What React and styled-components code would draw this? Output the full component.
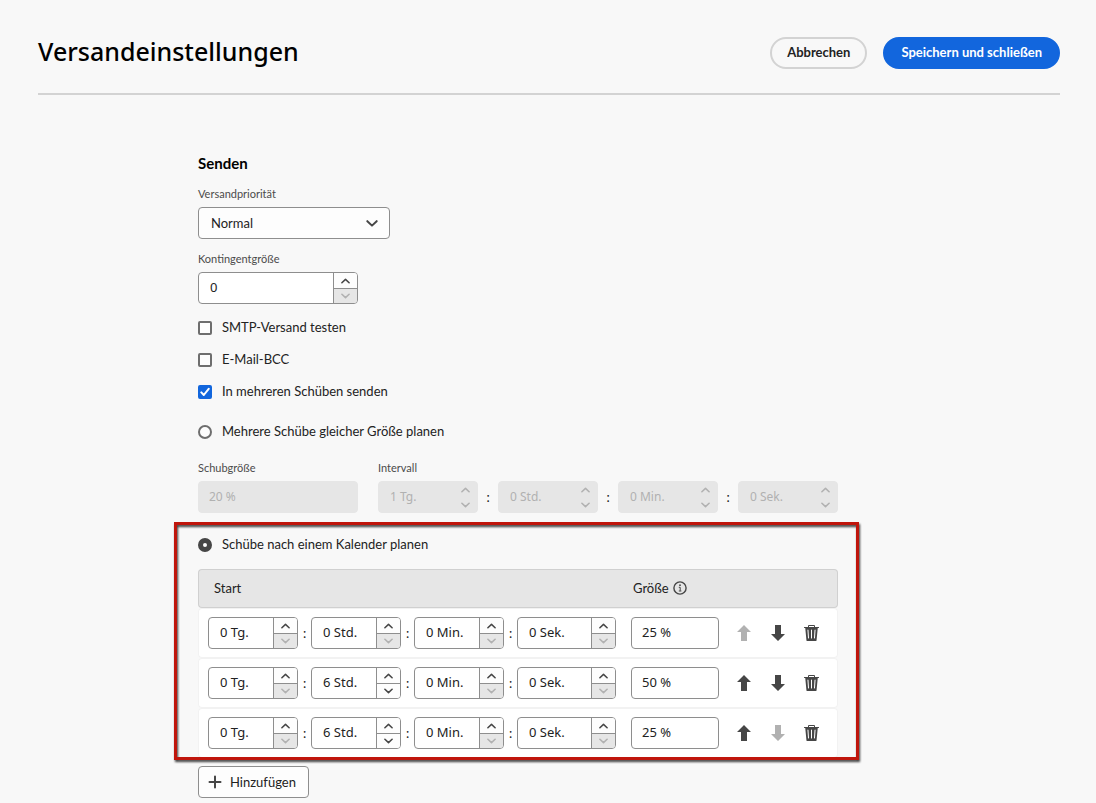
import React, { useState } from "react";
import styled, { createGlobalStyle } from "styled-components";

const GlobalStyle = createGlobalStyle`
  *, *::before, *::after { box-sizing: border-box; }
  body {
    margin: 0;
    background: #f8f8f8;
    color: #222;
    font-family: Lato, "Noto Sans", sans-serif;
    font-size: 13px;
    line-height: 20px;
  }
  input, select, button { font: inherit; color: inherit; margin: 0; }
`;

const Page = styled.div`
  padding: 37px 36px 0 38px;
`;

const Header = styled.header`
  display: flex;
  align-items: flex-start;
  gap: 16px;
  padding-bottom: 24px;
  border-bottom: 2px solid #d3d3d3;
`;

const Title = styled.h1`
  flex: 1;
  margin: 0;
  color: #000;
  font-family: "Noto Sans", sans-serif;
  font-size: 25px;
  font-weight: 500;
  line-height: 28px;
`;

const PillButton = styled.button`
  height: 32px;
  padding: 0 ${(p) => (p.$primary ? "16px" : "15px")} 2px;
  border: 2px solid ${(p) => (p.$primary ? "#1266dd" : "#d3d3d3")};
  border-radius: 16px;
  background: ${(p) => (p.$primary ? "#1266dd" : "transparent")};
  color: ${(p) => (p.$primary ? "#fff" : "#222")};
  font-weight: 700;
  white-space: nowrap;
`;

const Form = styled.main`
  max-width: 640px;
  margin: 58px 0 0 160px;
`;

const SectionTitle = styled.h2`
  margin: 0 0 11px;
  color: #000;
  font-size: 15px;
  font-weight: 700;
  line-height: 20px;
`;

const Field = styled.div`
  display: flex;
  flex-direction: column;
  width: ${(p) => p.$width || "auto"};
  margin-bottom: ${(p) => p.$gap || "0"};
`;

const FieldLabel = styled.label`
  color: #4b4b4b;
  font-size: 11px;
  line-height: 20px;
  padding-bottom: 3px;
`;

const SelectBox = styled.div`
  display: grid;
  align-items: center;
  > * { grid-area: 1 / 1; }
  > svg { justify-self: end; margin-right: 12px; color: #464646; pointer-events: none; }
`;

const Select = styled.select`
  appearance: none;
  height: 32px;
  padding: 0 12px;
  border: 1px solid #8e8e8e;
  border-radius: 4px;
  background: #fdfdfd;
`;

const StepperBox = styled.div`
  display: flex;
  width: ${(p) => p.$width};
  height: 32px;
  border: 1px solid ${(p) => (p.$disabled ? "#e6e6e6" : "#8e8e8e")};
  border-radius: 4px;
  background: ${(p) => (p.$disabled ? "#e6e6e6" : "#fff")};
  overflow: hidden;
`;

const StepperInput = styled.input`
  flex: 1;
  min-width: 0;
  padding: 0 0 2px 11px;
  border: 0;
  background: transparent;
  font-family: "Noto Sans", sans-serif;
  &:disabled { padding-bottom: 0; color: #b1b1b1; font-size: 12px; }
`;

const StepperButtons = styled.div`
  display: grid;
  grid-template-rows: 1fr 1fr;
  width: 24px;
  border-left: 1px solid ${(p) => (p.$disabled ? "#e6e6e6" : "#8e8e8e")};
`;

const StepButton = styled.button`
  display: grid;
  place-items: center;
  padding: 0;
  border: 0;
  background: #fdfdfd;
  color: #464646;
  & + & { border-top: 1px solid #8e8e8e; }
  &:disabled { background: #e6e6e6; color: #b1b1b1; }
  & + &:disabled { border-top-color: ${(p) => (p.$flat ? "#e6e6e6" : "#8e8e8e")}; }
`;

const TextInput = styled.input`
  width: ${(p) => p.$width};
  height: 32px;
  padding: 0 10px 2px;
  border: 1px solid #8e8e8e;
  border-radius: 4px;
  background: #fff;
  font-family: "Noto Sans", sans-serif;
  vertical-align: middle;
  &:disabled { border-color: #e6e6e6; background: #e6e6e6; color: #b1b1b1; font-size: 12px; }
`;

const Choice = styled.label`
  display: flex;
  align-items: center;
  gap: 10px;
  height: ${(p) => p.$height || "32px"};
`;

const ChoiceText = styled.span`
  padding-bottom: 2px;
`;

const Tick = styled.span`
  display: grid;
  place-items: center;
  > * { grid-area: 1 / 1; }
  > svg { pointer-events: none; }
`;

const CheckInput = styled.input`
  appearance: none;
  width: 14px;
  height: 14px;
  border: 2px solid #6e6e6e;
  border-radius: 2px;
  background: #fdfdfd;
  &:checked { border-color: #1266dd; background: #1266dd; }
`;

const RadioInput = styled.input`
  appearance: none;
  width: 14px;
  height: 14px;
  border: 2px solid #6e6e6e;
  border-radius: 50%;
  background: #fdfdfd;
  &:checked { border: 5px solid #464646; }
`;

const IntervalRow = styled.div`
  display: flex;
  gap: 20px;
  margin-top: 2px;
`;

const TimeGroup = styled.div`
  display: flex;
  align-items: center;
`;

const Colon = styled.span`
  width: ${(p) => p.$width};
  text-align: center;
`;

const Schedule = styled.section`
  position: relative;
  margin-top: 16px;
  &::after {
    content: "";
    position: absolute;
    inset: -7px -21px -2px -24px;
    border: 3px solid #c0160c;
    filter: drop-shadow(1px 2px 1px rgba(0, 0, 0, 0.75));
    pointer-events: none;
  }
`;

const Table = styled.table`
  width: 100%;
  margin-top: 8px;
  table-layout: fixed;
  border-spacing: 0;
`;

const HeadCell = styled.th`
  height: 39px;
  padding: 0 ${(p) => p.$pad} 2px;
  border: 1px solid #d0d0d0;
  border-width: 1px 0;
  background: #e6e6e6;
  font-weight: 400;
  text-align: left;
  &:first-child { border-left-width: 1px; border-radius: 4px 0 0 4px; }
  &:last-child { border-right-width: 1px; border-radius: 0 4px 4px 0; }
`;

const HeadLabel = styled.span`
  display: flex;
  align-items: center;
  gap: 4px;
`;

const Cell = styled.td`
  height: 50px;
  padding: 0;
  border: 1px solid #f2f2f2;
  border-width: 1px 0;
  background: #fff;
  &:first-child { padding-left: 9px; border-left-width: 1px; border-radius: 4px 0 0 4px; }
  &:last-child { border-right-width: 1px; border-radius: 0 4px 4px 0; }
`;

const Actions = styled.div`
  display: flex;
  gap: 16px;
`;

const IconButton = styled.button`
  display: grid;
  width: 18px;
  height: 18px;
  padding: 0;
  border: 0;
  background: transparent;
  color: #464646;
  &:disabled { color: #b1b1b1; }
`;

const AddButton = styled.button`
  display: flex;
  align-items: center;
  gap: 8px;
  height: 32px;
  margin-top: 8px;
  padding: 0 12px 0 9px;
  border: 1px solid #8e8e8e;
  border-radius: 4px;
  background: #fdfdfd;
`;

function Chevron({ up, size = 9 }) {
  return (
    <svg width={size} height={size === 9 ? 6 : 7} viewBox="0 0 10 6" aria-hidden="true">
      <path
        d={up ? "M1 5 5 1.2 9 5" : "M1 1 5 4.8 9 1"}
        fill="none"
        stroke="currentColor"
        strokeWidth="1.7"
        strokeLinecap="round"
        strokeLinejoin="round"
      />
    </svg>
  );
}

function Arrow({ down }) {
  return (
    <svg width="18" height="18" viewBox="0 0 18 18" aria-hidden="true">
      <path
        d={down ? "M6 1h6v9h4L9 17 2 10h4z" : "M9 1l7 7h-4v9H6V8H2z"}
        fill="currentColor"
      />
    </svg>
  );
}

function Trash() {
  return (
    <svg width="18" height="18" viewBox="0 0 18 18" aria-hidden="true">
      <path
        fill="currentColor"
        d="M15.75,3H12V2a1,1,0,0,0-1-1H6A1,1,0,0,0,5,2V3H1.25A.25.25,0,0,0,1,3.25v.5A.25.25,0,0,0,1.25,4h1L3.4565,16.55a.5.5,0,0,0,.5.45H13.046a.5.5,0,0,0,.5-.45L14.75,4h1A.25.25,0,0,0,16,3.75v-.5A.25.25,0,0,0,15.75,3ZM5.5325,14.5a.5.5,0,0,1-.53245-.46529L5,14.034l-.5355-8a.50112.50112,0,0,1,1-.067l.5355,8a.5.5,0,0,1-.46486.53283ZM9,14a.5.5,0,0,1-1,0V6A.5.5,0,0,1,9,6ZM11,3H6V2h5Zm1,11.034a.50112.50112,0,0,1-1-.067l.5355-8a.50112.50112,0,1,1,1,.067Z"
      />
    </svg>
  );
}

function InfoIcon() {
  return (
    <svg width="14" height="14" viewBox="0 0 14 14" aria-hidden="true">
      <circle cx="7" cy="7" r="6.1" fill="none" stroke="#464646" strokeWidth="1.4" />
      <circle cx="7" cy="4.2" r="0.9" fill="#464646" />
      <path d="M5.8 6.3H7.2V9.8M5.8 10h2.6" fill="none" stroke="#464646" strokeWidth="1" />
    </svg>
  );
}

function Stepper({ id, label, value, width, disabled, atMin }) {
  const [text, setText] = useState(value);
  return (
    <StepperBox $width={width} $disabled={disabled}>
      <StepperInput
        id={id}
        aria-label={label}
        value={text}
        disabled={disabled}
        onChange={(e) => setText(e.target.value)}
      />
      <StepperButtons $disabled={disabled}>
        <StepButton type="button" aria-label="Erhöhen" disabled={disabled} $flat={disabled}>
          <Chevron up />
        </StepButton>
        <StepButton type="button" aria-label="Verringern" disabled={disabled || atMin} $flat={disabled}>
          <Chevron />
        </StepButton>
      </StepperButtons>
    </StepperBox>
  );
}

function Checkbox({ label, initial = false }) {
  const [on, setOn] = useState(initial);
  return (
    <Choice>
      <Tick>
        <CheckInput type="checkbox" checked={on} onChange={() => setOn(!on)} />
        {on && (
          <svg width="10" height="10" viewBox="0 0 10 10" aria-hidden="true">
            <path
              d="M1.3 5.4 3.8 8 8.7 1.8"
              fill="none"
              stroke="#fff"
              strokeWidth="2"
              strokeLinecap="round"
              strokeLinejoin="round"
            />
          </svg>
        )}
      </Tick>
      <ChoiceText>{label}</ChoiceText>
    </Choice>
  );
}

const units = [
  { unit: "Tg.", name: "Tage", width: "90px" },
  { unit: "Std.", name: "Stunden", width: "90px" },
  { unit: "Min.", name: "Minuten", width: "90px" },
  { unit: "Sek.", name: "Sekunden", width: "99px" },
];

const waves = [
  { start: [0, 0, 0, 0], size: "25 %" },
  { start: [0, 6, 0, 0], size: "50 %" },
  { start: [0, 6, 0, 0], size: "25 %" },
];

function TimeFields({ values, colon, width, disabled, firstId }) {
  return (
    <TimeGroup>
      {units.map((u, i) => (
        <React.Fragment key={u.unit}>
          {i > 0 && <Colon $width={colon}>:</Colon>}
          <Stepper
            id={i === 0 ? firstId : undefined}
            label={u.name}
            value={`${values[i]} ${u.unit}`}
            width={width || u.width}
            disabled={disabled}
            atMin={values[i] === 0}
          />
        </React.Fragment>
      ))}
    </TimeGroup>
  );
}

export default function App() {
  const [mode, setMode] = useState("calendar");
  return (
    <Page>
      <GlobalStyle />
      <Header>
        <Title>Versandeinstellungen</Title>
        <PillButton type="button">Abbrechen</PillButton>
        <PillButton type="button" $primary>Speichern und schließen</PillButton>
      </Header>
      <Form>
        <SectionTitle>Senden</SectionTitle>
        <Field $width="192px" $gap="10px">
          <FieldLabel htmlFor="priority">Versandpriorität</FieldLabel>
          <SelectBox>
            <Select id="priority" defaultValue="Normal">
              <option>Normal</option>
            </Select>
            <Chevron size={12} />
          </SelectBox>
        </Field>
        <Field $gap="8px">
          <FieldLabel htmlFor="quota">Kontingentgröße</FieldLabel>
          <Stepper id="quota" value="0" width="160px" atMin />
        </Field>
        <Checkbox label="SMTP-Versand testen" />
        <Checkbox label="E-Mail-BCC" />
        <Checkbox label="In mehreren Schüben senden" initial />
        <Choice $height="48px">
          <RadioInput
            type="radio"
            name="mode"
            checked={mode === "equal"}
            onChange={() => setMode("equal")}
          />
          <ChoiceText>Mehrere Schübe gleicher Größe planen</ChoiceText>
        </Choice>
        <IntervalRow>
          <Field>
            <FieldLabel htmlFor="wave-size">Schubgröße</FieldLabel>
            <TextInput id="wave-size" $width="160px" defaultValue="20 %" disabled />
          </Field>
          <Field>
            <FieldLabel htmlFor="interval">Intervall</FieldLabel>
            <TimeFields values={[1, 0, 0, 0]} colon="20px" width="100px" disabled firstId="interval" />
          </Field>
        </IntervalRow>
        <Schedule>
          <Choice>
            <RadioInput
              type="radio"
              name="mode"
              checked={mode === "calendar"}
              onChange={() => setMode("calendar")}
            />
            <ChoiceText>Schübe nach einem Kalender planen</ChoiceText>
          </Choice>
          <Table>
            <colgroup>
              <col />
              <col width="104" />
              <col width="103" />
            </colgroup>
            <thead>
              <tr>
                <HeadCell $pad="15px">Start</HeadCell>
                <HeadCell $pad="2px">
                  <HeadLabel>Größe <InfoIcon /></HeadLabel>
                </HeadCell>
                <HeadCell $pad="0" aria-label="Aktionen" />
              </tr>
            </thead>
            <tbody>
              {waves.map((wave, i) => (
                <tr key={i}>
                  <Cell><TimeFields values={wave.start} colon="13px" /></Cell>
                  <Cell><TextInput aria-label="Größe" $width="88px" defaultValue={wave.size} /></Cell>
                  <Cell>
                    <Actions>
                      <IconButton type="button" aria-label="Nach oben" disabled={i === 0}><Arrow /></IconButton>
                      <IconButton type="button" aria-label="Nach unten" disabled={i === waves.length - 1}><Arrow down /></IconButton>
                      <IconButton type="button" aria-label="Löschen"><Trash /></IconButton>
                    </Actions>
                  </Cell>
                </tr>
              ))}
            </tbody>
          </Table>
        </Schedule>
        <AddButton type="button">
          <svg width="14" height="14" viewBox="0 0 14 14" aria-hidden="true">
            <path d="M7 1.5v11M1.5 7h11" stroke="#464646" strokeWidth="2" strokeLinecap="round" />
          </svg>
          Hinzufügen
        </AddButton>
      </Form>
    </Page>
  );
}
